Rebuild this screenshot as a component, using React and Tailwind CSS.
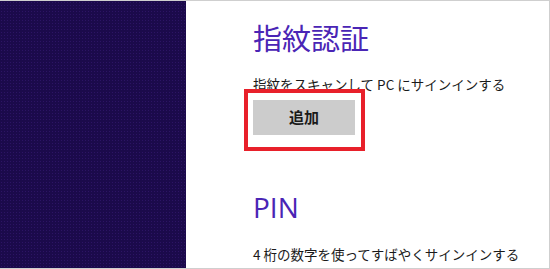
export default function App() {
  const jp = { fontFamily: '"Noto Sans CJK JP", "Noto Sans", sans-serif' };

  return (
    <div className="flex h-[269px] w-[550px] border-t border-r border-b border-[#cfcfcf] bg-white" style={jp}>
      <div className="w-[186px] shrink-0 bg-[#1b0a4b] bg-[radial-gradient(#2c1464_1px,transparent_1px)] bg-[length:3px_3px]" />
      <div className="flex-1 pl-[67px] pt-[22px]">
        <h1 className="text-[29px] leading-none text-[#4a25b5]">指紋認証</h1>
        <p className="mt-[26px] text-[13.5px] leading-none text-[#1a1a1a]">
          指紋をスキャンして PC にサインインする
        </p>
        <div className="relative mt-[8px] w-[102px]">
          <button className="h-[35px] w-[102px] bg-[#cccccc] text-[15px] font-bold text-[#1a1a1a]">
            追加
          </button>
          <div className="absolute -top-[11px] -bottom-[16px] -left-[9px] -right-[10px] border-4 border-[#e8202a]" />
        </div>
        <h2
          className="mt-[58px] text-[28px] leading-none text-[#4a25b5]"
          style={{ fontFamily: '"Open Sans", "Noto Sans", sans-serif' }}
        >
          PIN
        </h2>
        <p className="mt-[27px] text-[13.5px] leading-none text-[#1a1a1a]">
          4 桁の数字を使ってすばやくサインインする
        </p>
      </div>
    </div>
  );
}
